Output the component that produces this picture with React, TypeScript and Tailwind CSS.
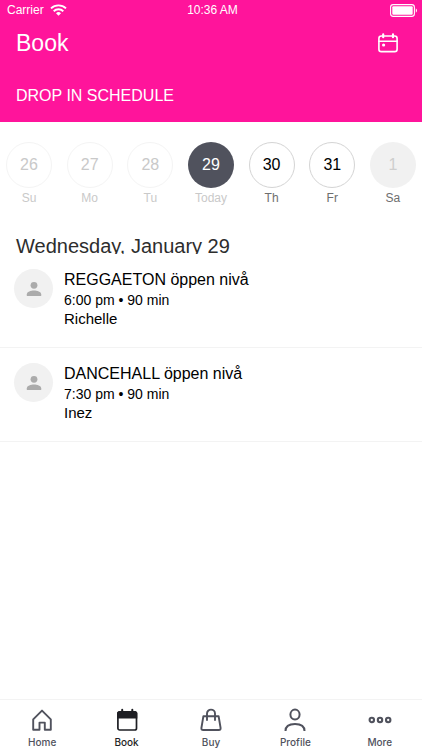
import React from 'react';

type Day = {
  num: string;
  label: string;
  circle: string;
  text: string;
};

const days: Day[] = [
  { num: '26', label: 'Su', circle: 'border border-[#f4f4f4] text-[#c9c9c9]', text: 'text-[#c9c9c9]' },
  { num: '27', label: 'Mo', circle: 'border border-[#f4f4f4] text-[#c9c9c9]', text: 'text-[#c9c9c9]' },
  { num: '28', label: 'Tu', circle: 'border border-[#f4f4f4] text-[#c9c9c9]', text: 'text-[#c9c9c9]' },
  { num: '29', label: 'Today', circle: 'bg-[#50525d] text-white', text: 'text-[#c9c9c9]' },
  { num: '30', label: 'Th', circle: 'border border-[#d4d4d4] text-black', text: 'text-[#6e6e6e]' },
  { num: '31', label: 'Fr', circle: 'border border-[#d4d4d4] text-black', text: 'text-[#6e6e6e]' },
  { num: '1', label: 'Sa', circle: 'bg-[#f1f1f1] text-[#cecece]', text: 'text-[#6e6e6e]' },
];

const classes = [
  { name: 'REGGAETON öppen nivå', time: '6:00 pm • 90 min', teacher: 'Richelle' },
  { name: 'DANCEHALL öppen nivå', time: '7:30 pm • 90 min', teacher: 'Inez' },
];

const WifiIcon = () => (
  <svg className="w-[17px] h-3" viewBox="0 0 17 12" fill="none" stroke="currentColor" strokeWidth="1.9">
    <path d="M1 4.4a10.8 10.8 0 0 1 15 0" />
    <path d="M3.7 7.2a6.9 6.9 0 0 1 9.6 0" />
    <path d="M8.5 11.8 6 9.3a3.5 3.5 0 0 1 5 0z" fill="currentColor" stroke="none" />
  </svg>
);

const BatteryIcon = () => (
  <svg className="w-7 h-[13px]" viewBox="0 0 28 13" fill="none">
    <rect x="0.6" y="0.6" width="23.8" height="11.8" rx="2.6" stroke="currentColor" strokeWidth="1.1" />
    <rect x="2.3" y="2.3" width="20.4" height="8.4" rx="1" fill="currentColor" />
    <path d="M25.8 4.3c1.6.7 1.6 3.7 0 4.4z" fill="currentColor" />
  </svg>
);

const ScheduleIcon = () => (
  <svg className="w-5 h-5" viewBox="0 0 20 20" fill="none" stroke="currentColor" strokeWidth="1.6" strokeLinecap="round">
    <rect x="0.9" y="3" width="18.2" height="15.6" rx="2.4" />
    <path d="M1 8.2h18" />
    <path d="M5.2 1.4v2.8M15 1.4v2.8" strokeWidth="2.2" />
    <circle cx="5.6" cy="12" r="1.6" fill="currentColor" stroke="none" />
  </svg>
);

const PersonIcon = () => (
  <svg className="w-4 h-4" viewBox="0 0 16 16" fill="#ababab">
    <circle cx="8" cy="4.3" r="3.4" />
    <path d="M0.8 15v-1.8C0.8 10.6 5 9.4 8 9.4s7.2 1.2 7.2 3.8V15z" />
  </svg>
);

const HomeIcon = () => (
  <svg className="w-6 h-6" viewBox="0 0 24 24" fill="none" stroke="currentColor" strokeWidth="1.9" strokeLinejoin="round">
    <path d="M3.2 11.4 12 2.6l8.8 8.8v10.4h-6v-7.2H9.5v7.2H3.2z" />
  </svg>
);

const BookIcon = () => (
  <svg className="w-6 h-6" viewBox="0 0 24 24" fill="none" stroke="currentColor" strokeWidth="1.7">
    <rect x="2.9" y="4" width="18.6" height="18" rx="1.8" />
    <path d="M2.1 10.4V5.2c0-1.200 1-2.200 2.200-2.200h15.800c1.200 0 2.200 1 2.200 2.200v5.200z" fill="currentColor" stroke="none" />
    <path d="M7.2 1.8v3M17.3 1.8v3" strokeWidth="2" strokeLinecap="round" />
  </svg>
);

const BuyIcon = () => (
  <svg className="w-6 h-6" viewBox="0 0 24 24" fill="none" stroke="currentColor" strokeWidth="1.9" strokeLinecap="round" strokeLinejoin="round">
    <path d="M4.4 8.2H19.6L21.6 20Q21.8 22 19.8 22H4.2Q2.2 22 2.4 20Z" />
    <path d="M8 12V5.6A4 4 0 0 1 16 5.6V12" />
  </svg>
);

const ProfileIcon = () => (
  <svg className="w-6 h-6" viewBox="0 0 24 24" fill="none" stroke="currentColor" strokeWidth="2">
    <ellipse cx="12" cy="6.6" rx="4.6" ry="5" />
    <path d="M2.5 23C2.5 18.6 5.900 16 12 16S21.500 18.600 21.500 23" />
  </svg>
);

const MoreIcon = () => (
  <svg className="w-6 h-6" viewBox="0 0 24 24" fill="none" stroke="currentColor" strokeWidth="2.1">
    <circle cx="3.8" cy="12" r="2.2" />
    <circle cx="12" cy="12" r="2.2" />
    <circle cx="20.2" cy="12" r="2.2" />
  </svg>
);

const tabs = [
  { label: 'Home', Icon: HomeIcon },
  { label: 'Book', Icon: BookIcon, active: true },
  { label: 'Buy', Icon: BuyIcon },
  { label: 'Profile', Icon: ProfileIcon },
  { label: 'More', Icon: MoreIcon },
];

const Header = () => {
  return (
    <header className="bg-[#ff149b] text-white">
      <div className="grid grid-cols-3 items-center h-5 pl-[7px] pr-1 text-xs">
        <div className="flex items-center gap-[6px]">
          <span>Carrier</span>
          <WifiIcon />
        </div>
        <span className="text-center">10:36 AM</span>
        <div className="flex justify-end">
          <BatteryIcon />
        </div>
      </div>
      <div className="flex items-center justify-between h-[46px] px-4">
        <h1 className="text-[23px] leading-7">Book</h1>
        <button type="button" aria-label="Schedule" className="px-2">
          <ScheduleIcon />
        </button>
      </div>
      <h2 className="h-14 px-4 pt-[18px] text-base">DROP IN SCHEDULE</h2>
    </header>
  );
};

const DayStrip = () => {
  return (
    <div className="flex justify-between pt-5 px-[6px]">
      {days.map((day) => (
        <button key={day.num} type="button" className="flex flex-col items-center w-[46px]">
          <span className={`flex items-center justify-center size-[46px] rounded-full text-base ${day.circle}`}>
            {day.num}
          </span>
          <span className={`mt-[2px] text-xs leading-4 ${day.text}`}>{day.label}</span>
        </button>
      ))}
    </div>
  );
};

const TabBar = () => {
  return (
    <nav className="grid grid-cols-5 border-t border-[#f3f3f3] pt-2 pb-px font-[Inter,sans-serif]">
      {tabs.map(({ label, Icon, active }) => (
        <a
          key={label}
          href="#"
          className={`flex flex-col items-center gap-1 text-[10px] leading-[13px] font-medium ${active ? 'text-[#1e1f24]' : 'text-[#50525d]'}`}
        >
          <Icon />
          {label}
        </a>
      ))}
    </nav>
  );
};

const App = () => {
  return (
    <div className="flex flex-col min-h-screen bg-white font-['Liberation_Sans',Arial,sans-serif]">
      <Header />
      <main className="flex-1">
        <DayStrip />
        <h3 className="mt-8 px-4 h-4 overflow-hidden text-xl leading-4 text-[#2d2d2d]">
          Wednesday, January 29
        </h3>
        <ul>
          {classes.map((item) => (
            <li key={item.name} className="flex gap-[11px] border-b border-[#f3f3f3] pl-[14px] pt-[15px] pb-[18px]">
              <span className="flex items-center justify-center size-[39px] rounded-full bg-[#f1f1f1]">
                <PersonIcon />
              </span>
              <div className="text-black">
                <h4 className="text-base leading-[22px]">{item.name}</h4>
                <p className="text-sm leading-[18px]">{item.time}</p>
                <p className="text-[15px] leading-5">{item.teacher}</p>
              </div>
            </li>
          ))}
        </ul>
      </main>
      <TabBar />
    </div>
  );
};

export default App;
